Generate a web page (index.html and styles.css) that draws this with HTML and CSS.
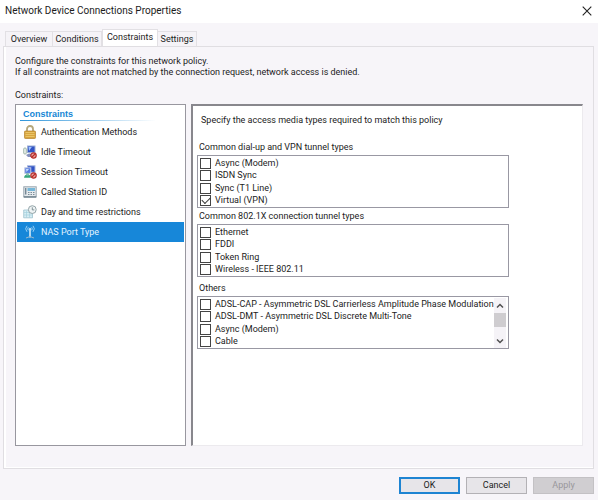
FILE: index.html
```html
<!DOCTYPE html>
<html lang="en">
<head>
<meta charset="utf-8">
<title>Network Device Connections Properties</title>
<link rel="stylesheet" href="styles.css">
</head>
<body>
<header class="titlebar">
  <h1>Network Device Connections Properties</h1>
  <button class="close" aria-label="Close"><svg width="10" height="10" viewBox="0 0 10 10"><path d="M.7.7l8.6 8.6M9.3.7L.7 9.3" stroke="#222" stroke-width="1.1"/></svg></button>
</header>
<main class="dialog">
  <nav class="tabs" role="tablist">
    <button class="tab tab-overview" role="tab">Overview</button>
    <button class="tab tab-conditions" role="tab">Conditions</button>
    <button class="tab tab-constraints active" role="tab" aria-selected="true">Constraints</button>
    <button class="tab tab-settings" role="tab">Settings</button>
  </nav>
  <section class="page" role="tabpanel">
    <p class="intro">Configure the constraints for this network policy.<br>If all constraints are not matched by the connection request, network access is denied.</p>
    <p class="caption">Constraints:</p>
    <div class="panes">
      <aside class="sidebar">
        <h2>Constraints</h2>
        <ul>
          <li><button class="item"><svg width="14" height="14" viewBox="0 0 14 14"><path d="M4 7V4a3 3 0 0 1 6 0v3" fill="none" stroke="#b5a77c" stroke-width="1.8"/><rect x="1.5" y="6" width="11" height="7.5" rx=".8" fill="#d8a53e" stroke="#b5832b" stroke-width=".7"/><path d="M2.5 7.5h9M2.5 9.5h9M2.5 11.5h9" stroke="#edcb72" stroke-width=".8"/></svg>Authentication Methods</button></li>
          <li><button class="item"><svg width="14" height="14" viewBox="0 0 14 14"><rect x=".7" y="3" width="2.6" height="6" rx="1" fill="#edf3ed" stroke="#7e9c8c" stroke-width=".7"/><rect x="4.5" y="1" width="7.5" height="6.5" fill="#3153c5" stroke="#9baed4"/><path d="M5.5 2h3.3L6 6z" fill="#9fc4ff"/><path d="M3 10l3-1.5 4 .5-2 3H5z" fill="#8590bd"/><circle cx="10.5" cy="10.5" r="2.7" fill="#e8a39c" stroke="#b82e2b" stroke-width="1.2"/><path d="M8.7 12.2l3.6-3.5" stroke="#b82e2b" stroke-width="1.2"/></svg>Idle Timeout</button></li>
          <li><button class="item"><svg width="14" height="14" viewBox="0 0 14 14"><rect x="4.5" y=".8" width="7.5" height="6.5" fill="#3153c5" stroke="#a6b7df"/><rect x="1.8" y="2.8" width="6" height="5.6" fill="#567be0" stroke="#c0cae3"/><path d="M3 4h3L3.5 7z" fill="#c3dcff"/><path d="M1 12.8q.5-3.3 3.5-3.3T8 12.8z" fill="#36a77b"/><circle cx="4.5" cy="9.2" r="1.5" fill="#86bdb0"/><circle cx="10.5" cy="10.5" r="2.7" fill="#e8a39c" stroke="#b82e2b" stroke-width="1.2"/><path d="M8.7 12.2l3.6-3.5" stroke="#b82e2b" stroke-width="1.2"/></svg>Session Timeout</button></li>
          <li><button class="item"><svg width="14" height="14" viewBox="0 0 14 14"><rect x=".8" y="1.8" width="12.4" height="10" fill="#e5eaed" stroke="#97a5af"/><rect x="4.5" y="3" width="7.5" height="3" fill="#76b7d9"/><path d="M2.7 3v6.5" stroke="#758895" stroke-width="1.4"/><path d="M5 7.5h7M5 9.5h7" stroke="#7b8c98" stroke-dasharray="1.5 1"/><path d="M.8 12h12.4" stroke="#657985" stroke-width="1.3"/></svg>Called Station ID</button></li>
          <li><button class="item"><svg width="14" height="14" viewBox="0 0 14 14"><path d="M.7 5h8.8v7.8H.7z" fill="#d6edf3" stroke="#9cc1ce" stroke-width=".8"/><path d="M1 7.5h8M1 10h8M3.5 6v6.5M6.5 6v6.5" stroke="#9dcddc" stroke-width=".6"/><circle cx="9.3" cy="4.6" r="3.9" fill="#eef3f4" stroke="#93a4a8"/><path d="M9.3 2.3v2.6h2" fill="none" stroke="#657a80" stroke-width=".8"/></svg>Day and time restrictions</button></li>
          <li><button class="item selected" aria-current="true"><svg width="14" height="14" viewBox="0 0 14 14" fill="none" stroke="#b9e1fa"><path d="M4 .8a4.5 4.5 0 0 0 0 6M10 .8a4.5 4.5 0 0 1 0 6M5.3 2.3a2.5 2.5 0 0 0 0 3M8.7 2.3a2.5 2.5 0 0 1 0 3" stroke-width=".8"/><path d="M7 4v8.5" stroke="#e5f3fb" stroke-width="1.5"/><path d="M3 13q4-3 8 0" stroke="#9cb9cc"/><circle cx="7" cy="4" r=".8" fill="#fff"/></svg>NAS Port Type</button></li>
        </ul>
      </aside>
      <div class="content">
        <p class="lead">Specify the access media types required to match this policy</p>
        <fieldset>
          <legend>Common dial-up and VPN tunnel types</legend>
          <div class="list"><div class="rows">
            <label><input type="checkbox">Async (Modem)</label>
            <label><input type="checkbox">ISDN Sync</label>
            <label><input type="checkbox">Sync (T1 Line)</label>
            <label><input type="checkbox" checked>Virtual (VPN)</label>
          </div></div>
        </fieldset>
        <fieldset>
          <legend>Common 802.1X connection tunnel types</legend>
          <div class="list"><div class="rows">
            <label><input type="checkbox">Ethernet</label>
            <label><input type="checkbox">FDDI</label>
            <label><input type="checkbox">Token Ring</label>
            <label><input type="checkbox">Wireless - IEEE 802.11</label>
          </div></div>
        </fieldset>
        <fieldset class="others">
          <legend>Others</legend>
          <div class="list"><div class="rows">
            <label><input type="checkbox">ADSL-CAP - Asymmetric DSL Carrierless Amplitude Phase Modulation</label>
            <label><input type="checkbox">ADSL-DMT - Asymmetric DSL Discrete Multi-Tone</label>
            <label><input type="checkbox">Async (Modem)</label>
            <label><input type="checkbox">Cable</label>
          </div>
          <div class="scroll">
            <button aria-label="Scroll up"><svg width="8" height="6" viewBox="0 0 8 6"><path d="M1 4.5l3-3 3 3" fill="none" stroke="#505050" stroke-width="1.5"/></svg></button>
            <span class="thumb"></span>
            <button class="down" aria-label="Scroll down"><svg width="8" height="6" viewBox="0 0 8 6"><path d="M1 1.5l3 3 3-3" fill="none" stroke="#505050" stroke-width="1.5"/></svg></button>
          </div></div>
        </fieldset>
      </div>
    </div>
  </section>
  <footer class="actions">
    <button class="btn default">OK</button>
    <button class="btn">Cancel</button>
    <button class="btn" disabled>Apply</button>
  </footer>
</main>
</body>
</html>
```
FILE: styles.css
```css
* { box-sizing: border-box; }
body {
  margin: 0;
  min-height: 100vh;
  display: flex;
  flex-direction: column;
  background: #f7f5f9;
  color: #1c1c1c;
  font: 9px/11px Roboto, "Liberation Sans", Arial, sans-serif;
}
h1, h2, p, ul, fieldset { margin: 0; padding: 0; border: 0; }
ul { list-style: none; }
button { font: inherit; color: inherit; border: 0; padding: 0; margin: 0; background: none; }
svg { display: block; flex: none; }

.titlebar {
  display: flex;
  align-items: center;
  justify-content: space-between;
  height: 23px;
  padding: 0 6px 2px 5px;
  background: #fff;
}
.titlebar h1 { font: 10px/14px Roboto, "Open Sans", sans-serif; }

.dialog {
  flex: 1;
  display: flex;
  flex-direction: column;
  padding: 6px 4px 6px 3px;
}
.tabs { display: flex; align-items: flex-end; height: 17px; padding-left: 2px; }
.tab {
  height: 15px;
  border: 1px solid #e2e0e4;
  border-bottom: 0;
  background: #f5f3f7;
  white-space: nowrap;
}
.tab-overview { width: 48px; }
.tab-conditions { width: 49px; border-left: 0; }
.tab-constraints { width: 56px; }
.tab-settings { width: 39px; border-left: 0; }
.tab.active { height: 17px; background: #fff; padding-bottom: 2px; }

.page {
  flex: 1;
  display: flex;
  flex-direction: column;
  border: 1px solid #e0dee2;
  padding: 9px 10px 22px 11px;
  box-shadow: inset 2px 0 #fff, inset 0 -1px #fff;
}
.caption { margin: 12px 0 3px; }
.panes { flex: 1; display: flex; gap: 5px; }
.sidebar {
  flex: 0 0 171px;
  border: 1px solid #98979f;
  background: #fff;
  padding: 3px 1px;
}
.sidebar h2 {
  margin: 0 29px 1px 3px;
  padding-left: 3px;
  color: #1686d5;
  font: bold 9px/12px "Liberation Sans", Arial, sans-serif;
  border-bottom: 1px solid;
  border-image: linear-gradient(to right, #2d94da, #fff) 1;
}
.item {
  display: flex;
  align-items: center;
  gap: 4px;
  width: 100%;
  height: 20px;
  padding-left: 6px;
  text-align: left;
}
.item.selected { background: #1787d9; color: #e4f3ff; }

.content {
  flex: 1;
  min-width: 0;
  background: #fff;
  border: 1px solid #eceaee;
  border-top: 2px solid #88878d;
  border-left: 2px solid #88878d;
  padding: 9px 73px 9px 4px;
}
.lead { margin: 0 0 16px 4px; white-space: nowrap; }
fieldset { min-width: 0; margin-bottom: 3px; }
fieldset.others { margin-top: 6px; }
legend { padding: 0 0 2px 2px; }
.list { display: flex; border: 1px solid #9998a3; padding: 1px 2px 0; }
.rows { flex: 1; min-width: 0; display: grid; grid-template-rows: repeat(4, 1fr); height: 50px; }
.rows label { display: flex; align-items: center; gap: 4px; white-space: nowrap; }
input {
  appearance: none;
  flex: none;
  width: 11px;
  height: 11px;
  margin: 0;
  border: 1px solid #444;
  background: #fff;
}
input:checked { display: grid; place-items: center; }
input:checked::before {
  content: "";
  width: 7px;
  height: 4px;
  margin-bottom: 2px;
  border: solid #333;
  border-width: 0 0 1px 1px;
  transform: rotate(-45deg);
}
.scroll { flex: 0 0 12px; display: flex; flex-direction: column; background: #f5f3f7; }
.scroll button { height: 15px; display: grid; place-items: center; }
.thumb { height: 14px; background: #cfcdd0; }
.scroll .down { margin-top: auto; }

.actions { display: flex; justify-content: flex-end; gap: 6px; padding-top: 8px; }
.btn { width: 61px; height: 17px; background: #e7e5e9; border: 1px solid #b3b1b5; }
.btn.default { border: 2px solid #1e84d2; }
.btn:disabled { background: #d0ced1; border-color: #c3c1c4; color: #99979b; }
```
